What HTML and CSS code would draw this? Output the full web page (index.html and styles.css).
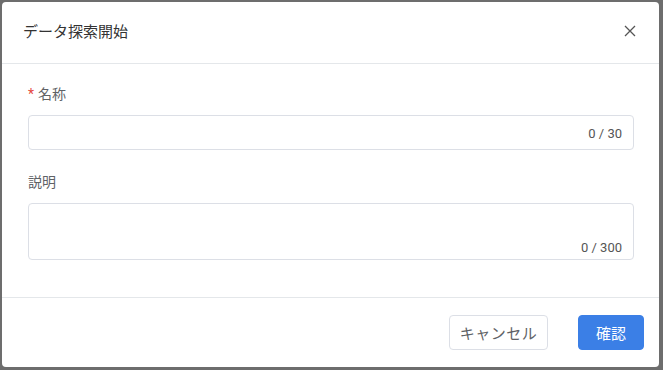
FILE: index.html
```html
<!DOCTYPE html>
<html lang="ja">
<head>
    <meta charset="UTF-8">
    <meta name="viewport" content="width=device-width, initial-scale=1.0">
    <title>データ探索開始</title>
    <link rel="stylesheet" href="styles.css">
</head>
<body>
    <div class="dialog">
        <div class="dialog-header">
            <span class="dialog-title">データ探索開始</span>
            <button class="dialog-close" aria-label="閉じる">
                <svg width="12" height="12" viewBox="0 0 12 12">
                    <path d="M1 1 L11 11 M11 1 L1 11" stroke="#555" stroke-width="1.3" fill="none"/>
                </svg>
            </button>
        </div>

        <form class="dialog-body">
            <div class="form-group">
                <label class="form-label"><span class="required">*</span>名称</label>
                <div class="input-wrap">
                    <input type="text" class="form-control" maxlength="30">
                    <span class="counter">0 / 30</span>
                </div>
            </div>

            <div class="form-group">
                <label class="form-label">説明</label>
                <div class="input-wrap">
                    <textarea class="form-control textarea" maxlength="300"></textarea>
                    <span class="counter counter-bottom">0 / 300</span>
                </div>
            </div>
        </form>

        <div class="dialog-footer">
            <button class="btn btn-default">キャンセル</button>
            <button class="btn btn-primary">確認</button>
        </div>
    </div>
</body>
</html>
```

FILE: styles.css
```css
:root {
    --primary-color: #3b7fe6;
    --border-color: #dcdfe6;
    --divider-color: #e4e7ea;
    --text-color: #333;
    --label-color: #606266;
}

* {
    box-sizing: border-box;
    margin: 0;
    padding: 0;
    font-family: Roboto, "Noto Sans CJK JP", sans-serif;
}

body {
    background: #6d6d6d;
    height: 370px;
    overflow: hidden;
}

.dialog {
    margin: 2px 4px 0 2px;
    height: 365px;
    background: white;
    border-radius: 4px;
    display: flex;
    flex-direction: column;
}

.dialog-header {
    height: 62px;
    padding: 0 23px 0 21px;
    display: flex;
    align-items: center;
    justify-content: space-between;
    border-bottom: 1px solid var(--divider-color);
}

.dialog-title {
    font-size: 15px;
    color: var(--text-color);
    padding-bottom: 4px;
}

.dialog-close {
    border: none;
    background: none;
    cursor: pointer;
    display: flex;
    padding-bottom: 3px;
}

.dialog-body {
    flex: 1;
    padding: 20px 25px 0 26px;
    border-bottom: 1px solid var(--divider-color);
}

.form-group {
    margin-bottom: 22px;
}

.form-label {
    display: block;
    line-height: 20px;
    font-size: 14px;
    color: var(--label-color);
    margin-bottom: 11px;
}

.required {
    color: #e5493f;
    margin-right: 4px;
}

.input-wrap {
    position: relative;
}

.form-control {
    display: block;
    width: 100%;
    height: 35px;
    border: 1px solid var(--border-color);
    border-radius: 4px;
    padding: 0 60px 0 12px;
    font-size: 14px;
    outline: none;
}

.textarea {
    height: 57px;
    resize: none;
    padding-top: 6px;
}

.counter {
    position: absolute;
    right: 12px;
    top: 50%;
    transform: translateY(-50%);
    font-size: 13px;
    color: #555;
}

.counter-bottom {
    top: auto;
    bottom: 5px;
    transform: none;
}

.dialog-footer {
    height: 69px;
    padding: 0 15px 0 0;
    display: flex;
    align-items: center;
    justify-content: flex-end;
    gap: 30px;
}

.btn {
    height: 35px;
    border-radius: 4px;
    font-size: 15px;
    cursor: pointer;
    padding-bottom: 1px;
}

.btn-default {
    width: 99px;
    background: white;
    border: 1px solid var(--border-color);
    color: var(--label-color);
    letter-spacing: 0.5px;
}

.btn-primary {
    width: 66px;
    background: var(--primary-color);
    border: 1px solid var(--primary-color);
    color: white;
}
```
